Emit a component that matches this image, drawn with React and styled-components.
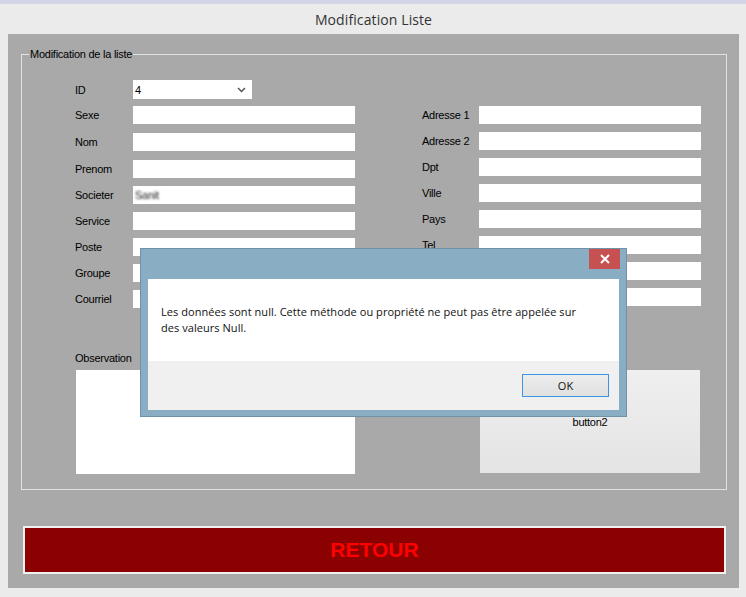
import React from 'react';
import styled, { createGlobalStyle } from 'styled-components';

const GlobalStyle = createGlobalStyle`
  html, body {
    margin: 0;
    padding: 0;
    background: #f4f4f4;
  }
  * {
    box-sizing: border-box;
  }
`;

const Window = styled.div`
  position: relative;
  width: 746px;
  height: 597px;
  background: #ebebeb;
  border-top: 4px solid #d3d4e6;
  padding: 0 7px 0 8px;
  font-family: "Liberation Sans", Arial, sans-serif;
  font-size: 11px;
  letter-spacing: -0.25px;
  color: #000;
`;

const TitleBar = styled.div`
  height: 30px;
  display: flex;
  align-items: center;
  justify-content: center;
  font-family: "Open Sans", "Noto Sans", sans-serif;
  font-size: 14px;
  letter-spacing: 0.1px;
  color: #333;
`;

const Panel = styled.div`
  background: #a9a9a9;
  height: 554px;
  padding: 14px 0 0 13px;
`;

const GroupBox = styled.fieldset`
  width: 706px;
  margin: 0;
  border: 1px solid #e2e2e2;
  padding: 20px 0 15px 0;
  min-inline-size: 0;

  legend {
    margin-left: 7px;
    padding: 0 1px;
    line-height: 12px;
    font-size: 11px;
  }
`;

const GroupInner = styled.div`
  padding-left: 53px;
`;

const Columns = styled.div`
  display: flex;
  gap: 67px;
`;

const LeftCol = styled.div`
  display: grid;
  grid-template-rows: 26px 27px 27px 26px 26px 26px 26px 26px 18px;
  align-items: start;
`;

const RightCol = styled.div`
  display: grid;
  padding-top: 26px;
  grid-template-rows: repeat(7, 26px) 18px;
  align-items: start;
`;

const Row = styled.div`
  display: grid;
  grid-template-columns: ${p => p.$label}px 222px;
  align-items: center;
  height: ${p => p.$h || 18}px;
`;

const Input = styled.div`
  height: 18px;
  background: #fff;
  display: flex;
  align-items: center;
  padding-left: 2px;
`;

const Combo = styled.div`
  width: 119px;
  height: 19px;
  background: #fff;
  display: flex;
  align-items: center;
  justify-content: space-between;
  padding: 0 6px 0 2px;
`;

const Blurred = styled.span`
  filter: blur(0.9px);
  color: #222;
  font-size: 11px;
`;

const Bottom = styled.div`
  display: flex;
  align-items: flex-start;
  margin-top: 43px;
  gap: 125px;
`;

const ObsBlock = styled.div`
  display: flex;
  flex-direction: column;
  gap: 5px;
`;

const ObsLabel = styled.div`
  line-height: 14px;
`;

const TextArea = styled.div`
  width: 279px;
  height: 104px;
  margin-left: 1px;
  background: #fff;
`;

const Button2 = styled.div`
  width: 220px;
  height: 103px;
  margin-top: 19px;
  background: linear-gradient(#efefef, #e4e4e4);
  display: flex;
  align-items: center;
  justify-content: center;
`;

const Retour = styled.div`
  width: 703px;
  height: 48px;
  margin: 36px 0 0 2px;
  background: #8b0000;
  border: 2px solid #f0f0f0;
  display: flex;
  align-items: center;
  justify-content: center;
  color: #ff0000;
  font-size: 21px;
  font-weight: bold;
  letter-spacing: 0;
`;

const Dialog = styled.div`
  position: absolute;
  left: 140px;
  top: 244px;
  width: 487px;
  height: 169px;
  background: #89adc2;
  border: 1px solid #6f92a7;
  display: flex;
  flex-direction: column;
  font-family: "Open Sans", "Noto Sans", sans-serif;
  font-size: 11px;
  letter-spacing: 0.05px;
`;

const DialogHead = styled.div`
  height: 30px;
  display: flex;
  justify-content: flex-end;
  padding-right: 6px;
`;

const CloseBtn = styled.div`
  width: 31px;
  height: 20px;
  background: #c75050;
  display: flex;
  align-items: center;
  justify-content: center;
`;

const DialogBody = styled.div`
  margin: 0 7px;
  height: 131px;
  display: flex;
  flex-direction: column;
`;

const Message = styled.div`
  height: 82px;
  background: #fff;
  padding: 25px 0 0 13px;
  line-height: 16px;
  white-space: nowrap;
  color: #111;
`;

const Footer = styled.div`
  flex: 1;
  background: #f0f0f0;
  display: flex;
  justify-content: flex-end;
  align-items: flex-start;
  padding: 13px 10px 0 0;
`;

const OkButton = styled.div`
  width: 87px;
  height: 23px;
  border: 1px solid #3c94e6;
  background: linear-gradient(#ececec, #e1e1e1);
  display: flex;
  align-items: center;
  justify-content: center;
  color: #111;
`;

const leftFields = ['Sexe', 'Nom', 'Prenom', 'Societer', 'Service', 'Poste', 'Groupe', 'Courriel'];
const rightFields = ['Adresse 1', 'Adresse 2', 'Dpt', 'Ville', 'Pays', 'Tel', 'Fax', 'Mobile'];

export default function App() {
  return (
    <>
      <GlobalStyle />
      <Window>
        <TitleBar>Modification Liste</TitleBar>
        <Panel>
          <GroupBox>
            <legend>Modification de la liste</legend>
            <GroupInner>
              <Columns>
                <LeftCol>
                  <Row $label={58} $h={19}>
                    <span>ID</span>
                    <Combo>
                      <span>4</span>
                      <svg width="9" height="6" viewBox="0 0 9 6">
                        <path d="M1 1 L4.5 4.5 L8 1" fill="none" stroke="#555" strokeWidth="1.5" />
                      </svg>
                    </Combo>
                  </Row>
                  {leftFields.map(f => (
                    <Row key={f} $label={58}>
                      <span>{f}</span>
                      <Input>{f === 'Societer' && <Blurred>Sanit</Blurred>}</Input>
                    </Row>
                  ))}
                </LeftCol>
                <RightCol>
                  {rightFields.map(f => (
                    <Row key={f} $label={57}>
                      <span>{f}</span>
                      <Input />
                    </Row>
                  ))}
                </RightCol>
              </Columns>
              <Bottom>
                <ObsBlock>
                  <ObsLabel>Observation</ObsLabel>
                  <TextArea />
                </ObsBlock>
                <Button2>button2</Button2>
              </Bottom>
            </GroupInner>
          </GroupBox>
          <Retour>RETOUR</Retour>
        </Panel>

        <Dialog>
          <DialogHead>
            <CloseBtn>
              <svg width="10" height="10" viewBox="0 0 10 10">
                <path d="M1 1 L9 9 M9 1 L1 9" stroke="#fff" strokeWidth="2" />
              </svg>
            </CloseBtn>
          </DialogHead>
          <DialogBody>
            <Message>
              Les données sont null. Cette méthode ou propriété ne peut pas être appelée sur
              <br />
              des valeurs Null.
            </Message>
            <Footer>
              <OkButton>OK</OkButton>
            </Footer>
          </DialogBody>
        </Dialog>
      </Window>
    </>
  );
}
